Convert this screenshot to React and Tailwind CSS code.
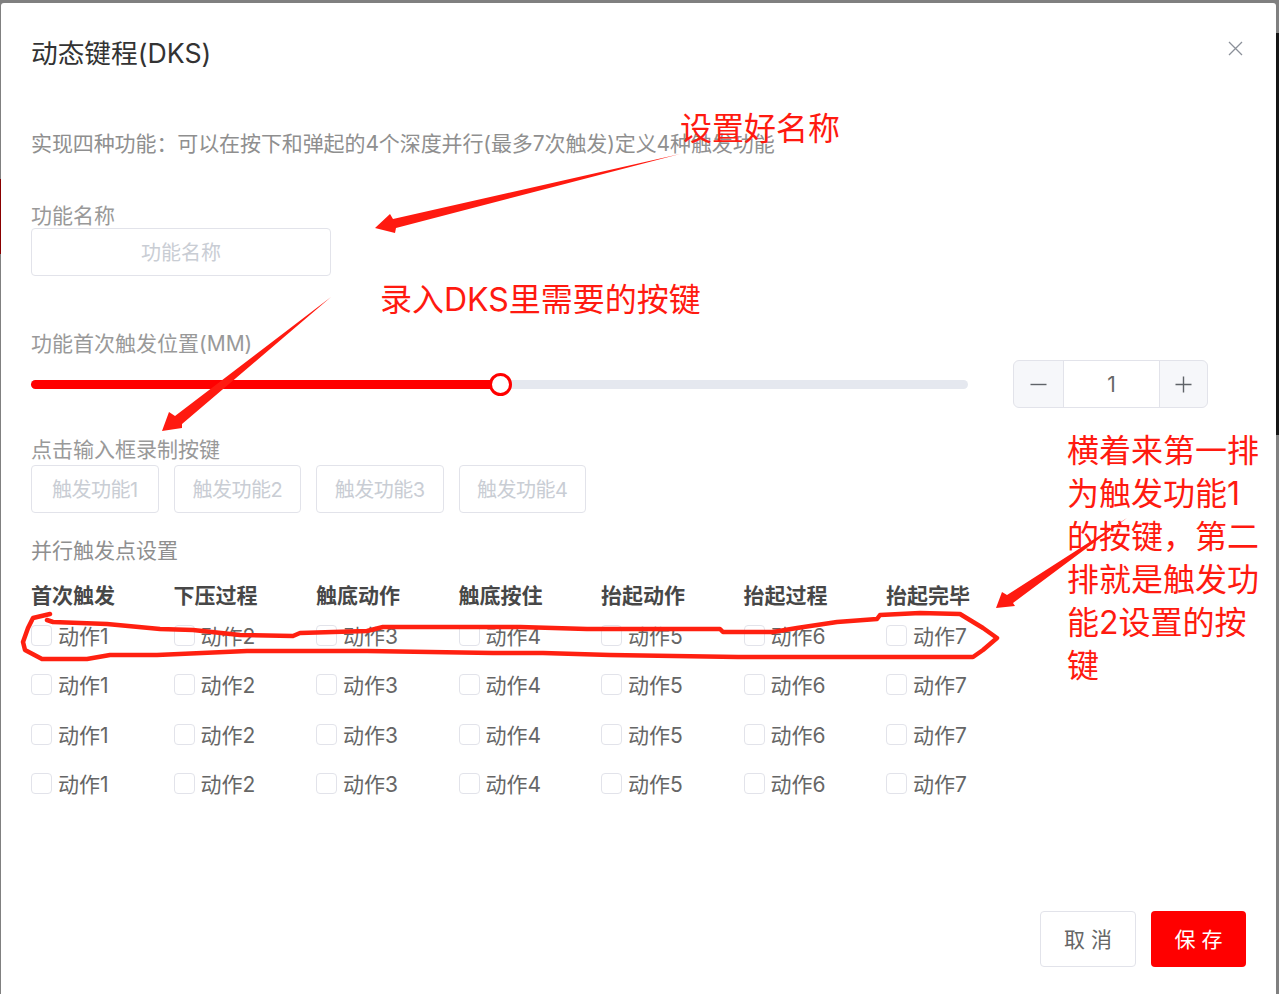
const headers = ["首次触发", "下压过程", "触底动作", "触底按住", "抬起动作", "抬起过程", "抬起完毕"];
const triggers = ["触发功能1", "触发功能2", "触发功能3", "触发功能4"];
const rows = [0, 1, 2, 3];
const loop = "M50 614 L33 618 L28 628 L23 642 L25 650 L42 659 L87 659 L110 655 L157 655 L247 651 L367 651 L493 653 L543 653 L610 655 L738 657 L887 657 L973 657 L983 650 L997 638 L983 628 L960 614 L920 613 L880 615 L877 619 L837 622 L797 628 L773 632 L723 632 L720 629 L587 629 L520 627 L383 627 L367 631 L300 633 L293 636 L240 635 L193 630 L160 629 L107 624 L53 622 L47 620";

export default function App() {
  return (
    <div className="relative w-[1279px] h-[994px] overflow-hidden bg-[#808080] font-['Inter','Noto_Sans_CJK_SC',sans-serif]">
      <div className="absolute right-0 top-[33px] h-[402px] w-[3px] bg-[#161616]" />
      <div className="absolute left-0 top-[179px] h-[75px] w-px bg-[#8a0000]" />

      <div className="relative ml-px mt-[3px] w-[1275px] h-[991px] rounded-tr-[3px] rounded-tl-[3px] bg-white flex flex-col pl-[30px] pr-[30px]">
        <h1 className="mt-[29px] h-[40px] leading-[42px] text-[26.7px] text-[#333333]">动态键程(DKS)</h1>
        <p className="mt-[56px] h-[30px] leading-[31px] text-[21px] tracking-[-0.1px] text-[#8f8f8f]">实现四种功能：可以在按下和弹起的4个深度并行(最多7次触发)定义4种触发功能</p>

        <label className="mt-[44px] h-[26px] leading-[28px] text-[21px] text-[#999999]">功能名称</label>
        <div className="w-[300px] h-[48px] pt-[2px] rounded-[4px] border border-[#e2e3ea] flex items-center justify-center text-[20px] text-[#c9cdd4]">功能名称</div>

        <label className="mt-[54px] h-[26px] leading-[28px] text-[21px] text-[#999999]">功能首次触发位置(MM)</label>
        <div className="mt-[4px] flex items-center h-[48px]">
          <div className="relative w-[937px] h-[9px] rounded-full bg-[#e5e8ef]">
            <div className="h-full w-[469px] rounded-full bg-[#ff0000]" />
            <div className="absolute left-[458px] top-[-7px] w-[23px] h-[23px] rounded-full border-[3px] border-[#ff0000] bg-white" />
          </div>
          <div className="ml-[45px] w-[195px] h-[48px] rounded-[6px] border border-[#e2e3ea] flex bg-[#f6f7fa] text-[#666666]">
            <div className="w-[49px] flex items-center justify-center">
              <svg width="17" height="17" viewBox="0 0 17 17" fill="none" stroke="#5f6368" strokeWidth="1.4"><path d="M0.5 8.5H16.5" /></svg>
            </div>
            <div className="w-[97px] pt-[2px] border-x border-[#e2e3ea] bg-white flex items-center justify-center text-[21px]">1</div>
            <div className="flex-1 flex items-center justify-center">
              <svg width="17" height="17" viewBox="0 0 17 17" fill="none" stroke="#5f6368" strokeWidth="1.4"><path d="M0.5 8.5H16.5M8.5 0.5V16.5" /></svg>
            </div>
          </div>
        </div>

        <label className="mt-[28px] h-[26px] leading-[28px] text-[21px] text-[#999999]">点击输入框录制按键</label>
        <div className="mt-[3px] grid grid-cols-[repeat(4,142.5px)] h-[48px]">
          {triggers.map((t) => (
            <div key={t} className="w-[127.5px] h-[48px] pt-[2px] rounded-[4px] border border-[#e2e3ea] flex items-center justify-center text-[20px] tracking-[-0.5px] text-[#c9cdd4]">{t}</div>
          ))}
        </div>

        <label className="mt-[24px] h-[26px] leading-[28px] text-[21px] text-[#8f8f8f]">并行触发点设置</label>
        <div className="mt-[19px] grid grid-cols-[repeat(7,142.5px)] h-[26px]">
          {headers.map((h) => (
            <div key={h} className="leading-[28px] text-[21px] font-bold text-[#474747]">{h}</div>
          ))}
        </div>
        <div className="mt-[2.5px] flex flex-col">
          {rows.map((r) => (
            <div key={r} className="grid grid-cols-[repeat(7,142.5px)] h-[49.5px]">
              {headers.map((_, i) => (
                <div key={i} className="flex items-center gap-[6px]">
                  <span className="w-[21px] h-[21px] rounded-[4px] border border-[#e2e3ea] bg-white" />
                  <span className="pt-[2px] text-[21px] text-[#666666]">{`动作${i + 1}`}</span>
                </div>
              ))}
            </div>
          ))}
        </div>

        <div className="mt-auto mb-[27px] flex justify-end gap-[15px]">
          <button className="w-[96px] h-[56px] pt-[2px] rounded-[4px] border border-[#e2e3ea] bg-white text-[21px] text-[#666666]">取 消</button>
          <button className="w-[95px] h-[56px] pt-[2px] rounded-[4px] bg-[#ff0000] text-[21px] text-white">保 存</button>
        </div>

        <svg className="absolute left-[1227px] top-[38px]" width="15" height="15" viewBox="0 0 15 15" fill="none" stroke="#8b9099" strokeWidth="1.3"><path d="M1 1L14 14M14 1L1 14" /></svg>
      </div>

      <svg className="absolute inset-0 pointer-events-none" width="1279" height="994" viewBox="0 0 1279 994" fill="none">
        <path d={loop} stroke="#ff2010" strokeWidth="4.5" strokeLinejoin="round" strokeLinecap="round" />
        <polygon points="680,154 393,219 390,214 375,228 395,233 396,228" fill="#ff1a10" />
        <polygon points="331,297 175,416 169,412 162,431 182,428 182,424" fill="#ff1a10" />
        <polygon points="1127,518 1007,595 1002,592 996,608 1015,606 1013,603" fill="#ff1a10" />
      </svg>

      <div className="absolute left-[680px] top-[106px] h-[46px] leading-[46px] text-[32px] text-[#ff1a10] whitespace-nowrap">设置好名称</div>
      <div className="absolute left-[380px] top-[277px] h-[46px] leading-[46px] text-[32px] text-[#ff1a10] whitespace-nowrap">录入DKS里需要的按键</div>
      <div className="absolute left-[1067px] top-[429px] text-[32px] leading-[43px] text-[#ff1a10] whitespace-nowrap">
        <div>横着来第一排</div>
        <div>为触发功能1</div>
        <div>的按键，第二</div>
        <div>排就是触发功</div>
        <div>能2设置的按</div>
        <div>键</div>
      </div>
    </div>
  );
}
